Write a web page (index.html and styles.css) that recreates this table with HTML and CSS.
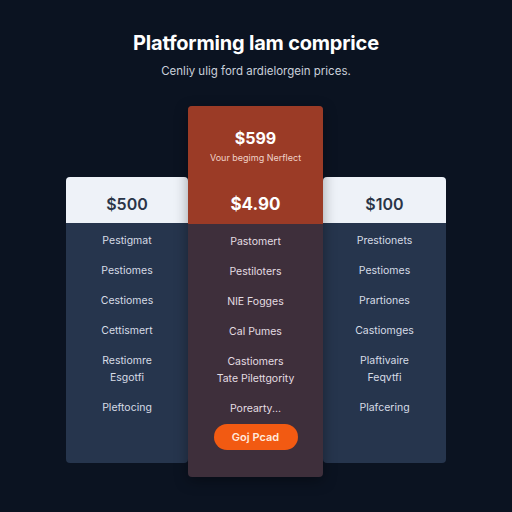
FILE: index.html
```html
<!DOCTYPE html>
<html>
<head>
<meta charset="utf-8">
<link rel="stylesheet" href="styles.css">
</head>
<body>
<header class="hero">
  <h1 class="title">Platforming lam comprice</h1>
  <p class="subtitle">Cenliy ulig ford ardielorgein prices.</p>
</header>
<main class="plans">
  <section class="card side">
    <div class="card-head light"><span class="price dark">$500</span></div>
    <ul class="features">
      <li>Pestigmat</li>
      <li>Pestiomes</li>
      <li>Cestiomes</li>
      <li>Cettismert</li>
      <li>Restiomre<br>Esgotfi</li>
      <li>Pleftocing</li>
    </ul>
  </section>
  <section class="card featured">
    <div class="card-head accent">
      <span class="price top">$599</span>
      <span class="tagline">Vour begimg Nerflect</span>
      <span class="price main">$4.90</span>
    </div>
    <ul class="features">
      <li>Pastomert</li>
      <li>Pestiloters</li>
      <li>NlE Fogges</li>
      <li>Cal Pumes</li>
      <li>Castiomers<br>Tate Pilettgority</li>
      <li>Porearty...</li>
    </ul>
    <button class="cta">Goj Pcad</button>
  </section>
  <section class="card side">
    <div class="card-head light"><span class="price dark">$100</span></div>
    <ul class="features">
      <li>Prestionets</li>
      <li>Pestiomes</li>
      <li>Prartiones</li>
      <li>Castiomges</li>
      <li>Plaftivaire<br>Feqvtfi</li>
      <li>Plafcering</li>
    </ul>
  </section>
</main>
</body>
</html>
```

FILE: styles.css
```css
* { box-sizing: border-box; }
html, body { margin: 0; padding: 0; }
body {
  width: 512px;
  height: 512px;
  background: #0b1321;
  font-family: Inter, "Noto Sans", sans-serif;
  color: #fff;
  overflow: hidden;
}
.hero {
  text-align: center;
  padding-top: 31px;
}
.title {
  margin: 0;
  font-size: 20px;
  font-weight: 700;
  letter-spacing: -0.2px;
  line-height: 24px;
  color: #ffffff;
}
.subtitle {
  margin: 8px 0 0;
  font-size: 11.5px;
  line-height: 16px;
  color: #c9d0da;
}
.plans {
  display: flex;
  justify-content: center;
  align-items: flex-start;
  margin-top: 27px;
}
.card {
  display: flex;
  flex-direction: column;
  border-radius: 4px;
  overflow: hidden;
}
.side {
  width: 122px;
  height: 286px;
  margin-top: 71px;
  background: #26354d;
}
.side:last-child { width: 123px; }
.featured {
  width: 135px;
  height: 371px;
  background: #3e2f3b;
  position: relative;
  z-index: 1;
  box-shadow: 0 4px 14px rgba(0,0,0,0.35);
}
.card-head {
  display: flex;
  flex-direction: column;
  align-items: center;
}
.card-head.light {
  height: 46px;
  justify-content: center;
  padding-top: 7px;
  background: #eef2f8;
}
.card-head.accent {
  height: 118px;
  background: #9b3b26;
  padding-top: 22px;
}
.price {
  font-weight: 700;
  font-size: 16px;
  line-height: 20px;
}
.price.dark { color: #2a3548; font-size: 16px; font-weight: 600; }
.price.top { color: #fff; }
.tagline {
  margin-top: 4px;
  font-size: 9px;
  line-height: 12px;
  color: #f0d2c8;
}
.price.main {
  margin-top: 30px;
  font-size: 17px;
}
.features {
  list-style: none;
  margin: 0;
  padding: 9px 0 0;
  display: flex;
  flex-direction: column;
  gap: 13px;
  text-align: center;
  font-size: 10.5px;
  line-height: 17px;
  color: #d6dce6;
}
.featured .features { color: #e4dde2; }
.cta {
  align-self: center;
  margin-top: 7px;
  width: 84px;
  height: 26px;
  border: none;
  border-radius: 13px;
  background: #f25a12;
  color: #ffe9dd;
  font-family: Inter, "Noto Sans", sans-serif;
  font-size: 11px;
  font-weight: 600;
}
```
